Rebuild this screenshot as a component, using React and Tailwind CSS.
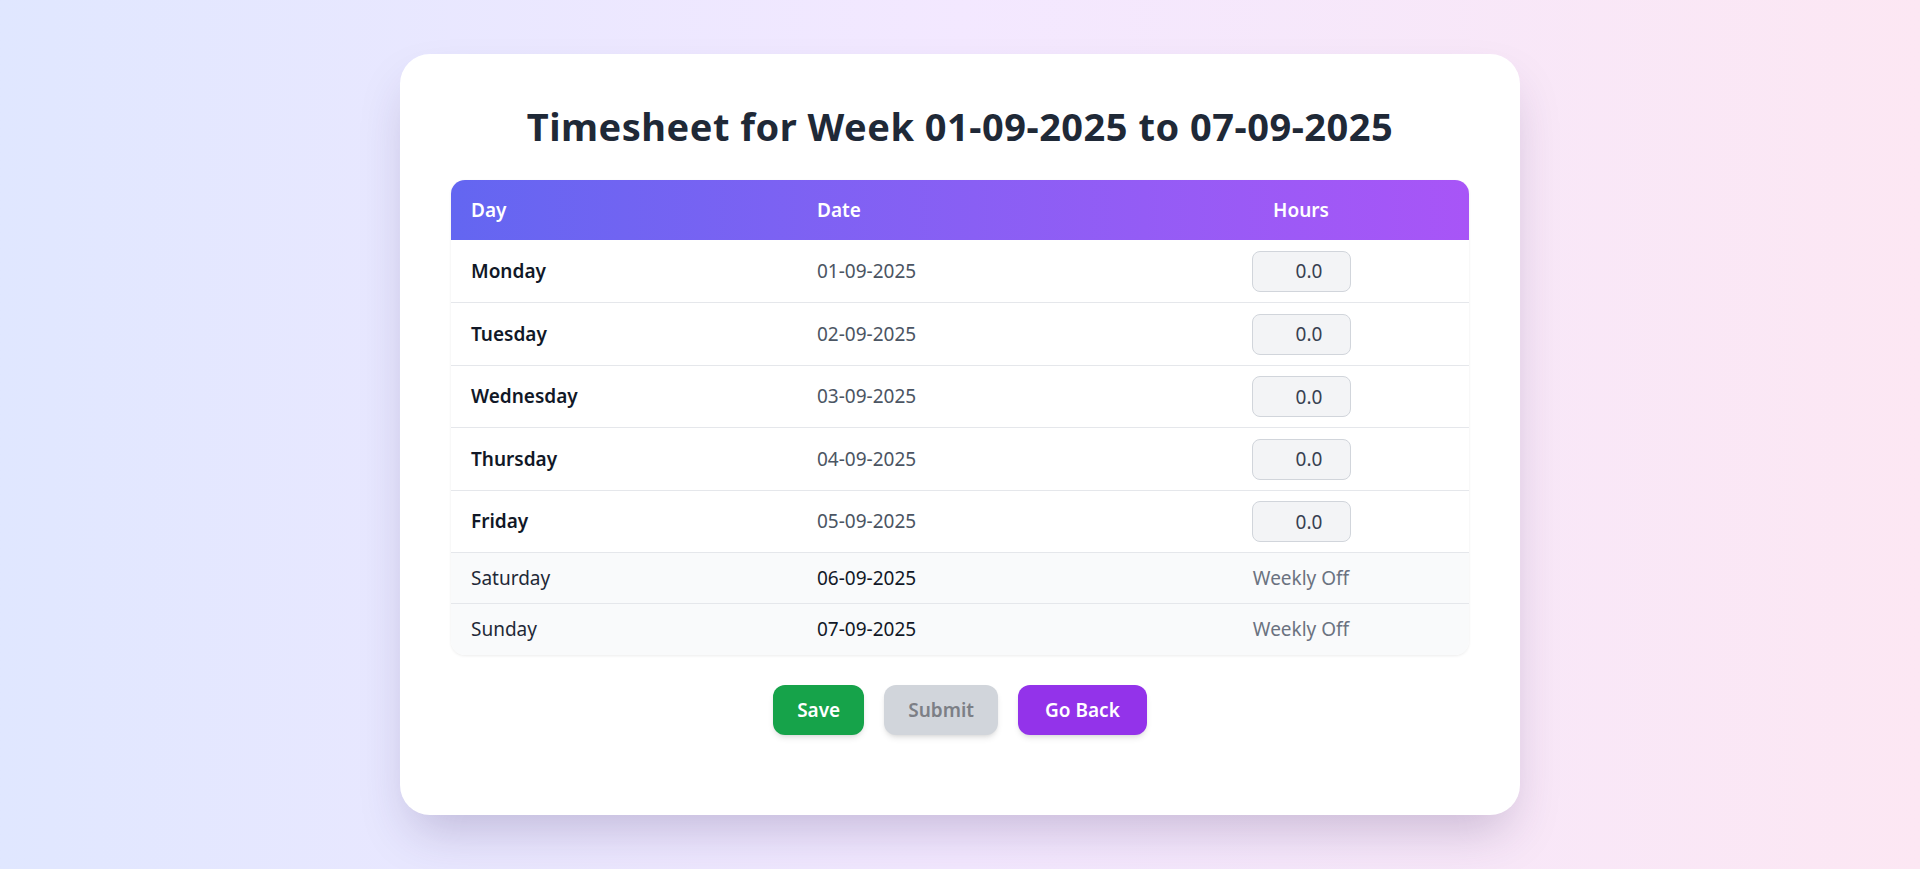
import React from "react";

const dias = [
  { dia: "Monday", data: "01-09-2025", folga: false },
  { dia: "Tuesday", data: "02-09-2025", folga: false },
  { dia: "Wednesday", data: "03-09-2025", folga: false },
  { dia: "Thursday", data: "04-09-2025", folga: false },
  { dia: "Friday", data: "05-09-2025", folga: false },
  { dia: "Saturday", data: "06-09-2025", folga: true },
  { dia: "Sunday", data: "07-09-2025", folga: true },
];

const App = () => {
  return (
    <div
      className="min-h-screen w-full flex items-center justify-center bg-gradient-to-r from-[#e0e7ff] via-[#f3e8ff] to-[#fce7f3]"
      style={{ fontFamily: '"Noto Sans", "Open Sans", sans-serif' }}
    >
      <div className="w-[1120px] bg-white rounded-[30px] shadow-[0_25px_50px_-12px_rgba(60,40,100,0.25)] px-[51px] pt-[50px] pb-[80px]">
        <h1 className="text-center text-[38px] leading-[45px] font-bold text-[#1f2937] mb-[31px] tracking-[0.5px]">
          Timesheet for Week 01-09-2025 to 07-09-2025
        </h1>

        <div className="rounded-[14px] overflow-hidden shadow-[0_1px_3px_rgba(0,0,0,0.08)]">
          <table className="w-full table-fixed border-collapse">
            <thead className="bg-gradient-to-r from-[#6366f1] to-[#a855f7]">
              <tr className="h-[60px]">
                <th className="w-[346px] px-[20px] text-left text-[19px] font-semibold text-white">
                  Day
                </th>
                <th className="w-[336px] px-[20px] text-left text-[19px] font-semibold text-white">
                  Date
                </th>
                <th className="px-[20px] text-center text-[19px] font-semibold text-white">
                  Hours
                </th>
              </tr>
            </thead>
            <tbody>
              {dias.map((d) =>
                d.folga ? (
                  <tr key={d.dia} className="h-[51px] bg-[#f9fafb] border-t border-[#e5e7eb]">
                    <td className="px-[20px] text-[19px] text-[#1f2937]">{d.dia}</td>
                    <td className="px-[20px] text-[19px] text-[#111827]">{d.data}</td>
                    <td className="px-[20px] text-center text-[19px] text-[#6b7280]">Weekly Off</td>
                  </tr>
                ) : (
                  <tr key={d.dia} className="h-[62.5px] bg-white border-t border-[#e5e7eb] first:border-t-0">
                    <td className="px-[20px] text-[19px] font-semibold text-[#111827]">{d.dia}</td>
                    <td className="px-[20px] text-[19px] text-[#4b5563]">{d.data}</td>
                    <td className="px-[20px] text-center">
                      <input
                        type="text"
                        defaultValue="0.0"
                        className="w-[99px] h-[41px] pl-[16px] text-center text-[19px] text-[#374151] bg-[#f3f4f6] border border-[#d1d5db] rounded-[8px] outline-none"
                      />
                    </td>
                  </tr>
                )
              )}
            </tbody>
          </table>
        </div>

        <div className="flex justify-center gap-[20px] mt-[30px]">
          <button className="h-[50px] px-[24px] rounded-[12px] bg-[#16a34a] text-white text-[19px] font-semibold shadow-md">
            Save
          </button>
          <button className="h-[50px] px-[24px] rounded-[12px] bg-[#d1d5db] text-[#7c7f86] text-[19px] font-semibold shadow-md">
            Submit
          </button>
          <button className="h-[50px] px-[27px] rounded-[12px] bg-[#9333ea] text-white text-[19px] font-semibold shadow-md">
            Go Back
          </button>
        </div>
      </div>
    </div>
  );
};

export default App;
